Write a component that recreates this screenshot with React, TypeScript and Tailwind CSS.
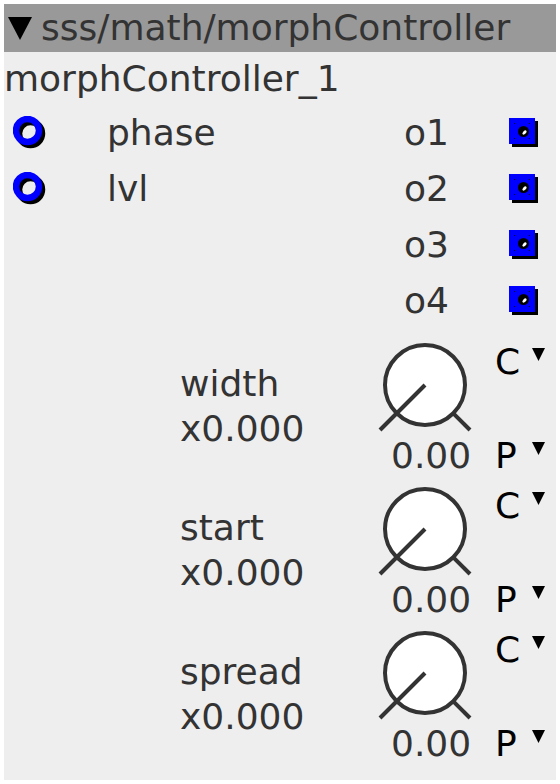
import React from "react";

const inlets = ["phase", "lvl", "", ""];
const outlets = ["o1", "o2", "o3", "o4"];
const params = ["width", "start", "spread"];

function Inlet() {
  return (
    <svg width="34" height="34" viewBox="0 0 34 34">
      <circle cx="17.5" cy="17.5" r="11.5" fill="none" stroke="#000" strokeWidth="6.5" />
      <circle cx="14.5" cy="14.5" r="11.5" fill="none" stroke="#0000ff" strokeWidth="6.5" />
    </svg>
  );
}

function Outlet() {
  return (
    <svg width="30" height="30" viewBox="0 0 30 30">
      <rect x="3" y="3" width="26" height="26" fill="#000" />
      <rect x="0" y="0" width="26" height="26" fill="#0000ff" />
      <rect x="5" y="5" width="1" height="1" fill="#000" />
      <rect x="20" y="5" width="1" height="1" fill="#000" />
      <rect x="5" y="20" width="1" height="1" fill="#000" />
      <rect x="20" y="20" width="1" height="1" fill="#000" />
      <circle cx="14.5" cy="13.5" r="5.5" fill="#000" />
      <ellipse cx="15.5" cy="14.5" rx="2.6" ry="1.5" fill="#fff" transform="rotate(-45 15.5 14.5)" />
    </svg>
  );
}

function Knob() {
  return (
    <svg width="100" height="94" viewBox="0 0 100 94">
      <circle cx="49" cy="45" r="40" fill="#fff" stroke="#333" strokeWidth="4" />
      <line x1="49" y1="45" x2="4" y2="90" stroke="#333" strokeWidth="4" />
      <line x1="77.3" y1="73.3" x2="94" y2="90" stroke="#333" strokeWidth="4" />
    </svg>
  );
}

function Drop({ letter }: { letter: string }) {
  return (
    <div className="flex w-[60px] items-start leading-none text-black">
      <span className="w-[37px] shrink-0">{letter}</span>
      <svg className="mt-[4px] h-[13px] w-[13px] shrink-0" viewBox="0 0 10 10">
        <polygon points="0,0 10,0 5,10" fill="#000" />
      </svg>
    </div>
  );
}

export default function App() {
  return (
    <div className="min-h-[784px] bg-white pl-[4px] pt-[4px] font-['DejaVu_Sans',sans-serif] text-[36px] text-[#333]">
      <div className="h-[776px] w-[552px] bg-[#eeeeee]">
        {/* header */}
        <div className="flex h-[48px] items-center bg-[#999999] pl-[4px] leading-none">
          <svg width="24" height="23" viewBox="0 0 24 23">
            <polygon points="0,0 24,0 12,23" fill="#000" />
          </svg>
          <span className="ml-[9px]">sss/math/morphController</span>
        </div>

        <div className="flex h-[53px] items-center leading-none">morphController_1</div>

        {/* io rows */}
        {outlets.map((o, i) => (
          <div key={o} className="flex h-[56px] items-center leading-none">
            <div className="w-[103px] pl-[9px]">{inlets[i] && <Inlet />}</div>
            <div className="w-[297px]">{inlets[i]}</div>
            <div className="w-[105px]">{o}</div>
            <Outlet />
          </div>
        ))}

        <div className="h-[7px]" />

        {/* params */}
        {params.map((p) => (
          <div key={p} className="flex h-[144px]">
            <div className="w-[176px]" />
            <div className="w-[196px] pt-[25px] leading-[45px]">
              <div>{p}</div>
              <div>x0.000</div>
            </div>
            <div className="flex w-[119px] flex-col">
              <div className="mt-[4px]">
                <Knob />
              </div>
              <div className="ml-[15px] mt-[4px] leading-none">0.00</div>
            </div>
            <div className="flex flex-col">
              <div className="mt-[8px]">
                <Drop letter="C" />
              </div>
              <div className="mt-[58px]">
                <Drop letter="P" />
              </div>
            </div>
          </div>
        ))}
      </div>
    </div>
  );
}
